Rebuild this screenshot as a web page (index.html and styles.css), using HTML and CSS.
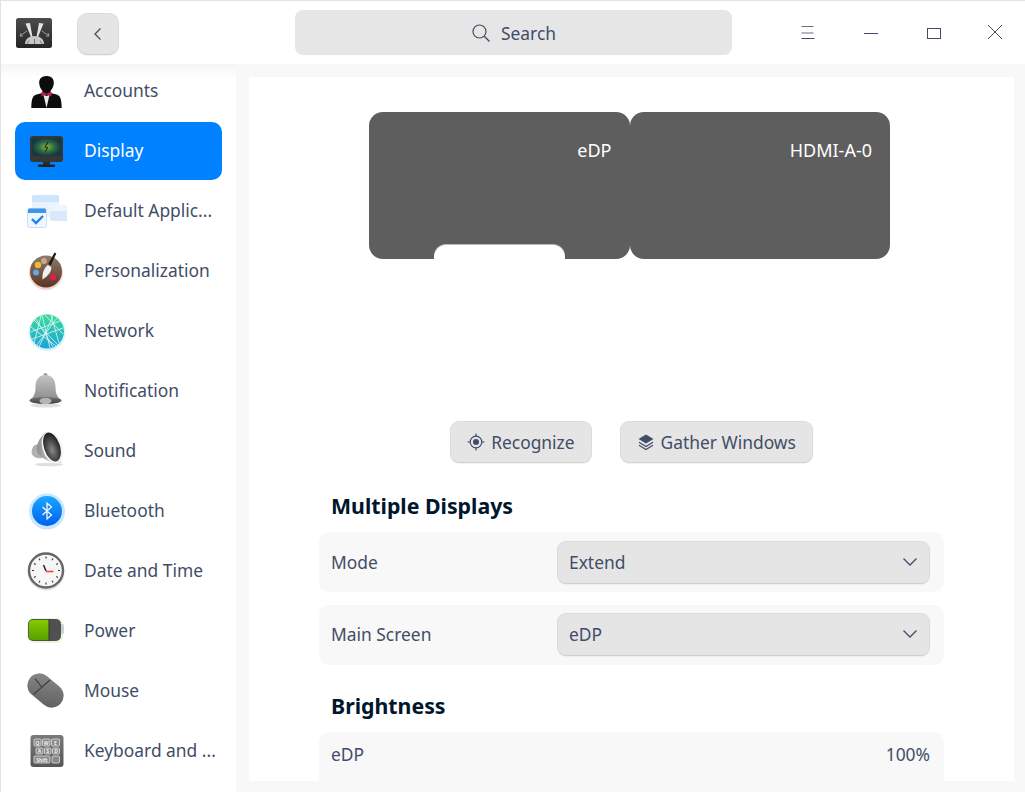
FILE: index.html
```html
<!DOCTYPE html>
<html lang="en">
<head>
<meta charset="utf-8">
<title>Display</title>
<link rel="stylesheet" href="styles.css">
</head>
<body>
<div class="window">
  <header class="titlebar">
    <div class="title-left">
      <svg class="app-logo" width="36" height="32" viewBox="0 0 36 32">
        <defs><linearGradient id="lg" x1="0" y1="0" x2="0" y2="1"><stop offset="0" stop-color="#4c4c4c"/><stop offset="1" stop-color="#262626"/></linearGradient></defs>
        <rect x="0" y="1" width="36" height="30" rx="2.500" fill="url(#lg)"/>
        <path d="M9.500 6.500l4.500-.5 2.500 14h-1.500zM27.500 6.500l-4.500-.5-2.500 14h1.500z" fill="#e4e4e4"/>
        <path d="M9 27c0-5 4-8 9.500-8s9.500 3 9.500 8z" fill="#c8c8c8"/>
        <path d="M13 23.500l-2 3.500M18.500 22v5M24 23.500l2 3.500" stroke="#555" stroke-width=".7"/>
        <path d="M4 19l7-5M33 19l-7-5M4 19l1-3M4 19l3 .2M33 19l-1-3M33 19l-3 .2" stroke="#9a9a9a" stroke-width="1" fill="none"/>
      </svg>
      <button class="back-btn" type="button" aria-label="Back">
        <svg width="10" height="16" viewBox="0 0 10 16"><path d="M7.500 2.500L2 8l5.500 5.500" fill="none" stroke="#414d68" stroke-width="1.300"/></svg>
      </button>
    </div>
    <div class="search">
      <svg width="20" height="20" viewBox="0 0 20 20"><circle cx="8.500" cy="8.500" r="6.500" fill="none" stroke="#414d68" stroke-width="1.200"/><path d="M13.300 13.300L18.500 18.500" stroke="#414d68" stroke-width="1.400"/></svg>
      <span>Search</span>
    </div>
    <div class="win-controls">
      <svg width="14" height="14" viewBox="0 0 14 14"><path d="M0.500 .5h12M0.500 7h12" stroke="#414d68" stroke-width="1" opacity=".8"/><path d="M0.500 12.500h13" stroke="#414d68" stroke-width="1"/></svg>
      <svg width="14" height="14" viewBox="0 0 14 14"><path d="M0 7.500h14" stroke="#414d68" stroke-width="1"/></svg>
      <svg width="14" height="14" viewBox="0 0 14 14"><rect x="0.500" y="2.500" width="13" height="10" fill="none" stroke="#414d68" stroke-width="1"/></svg>
      <svg class="close-icon" width="14" height="14" viewBox="0 0 14 14"><path d="M0 0L14 14M14 0L0 14" stroke="#414d68" stroke-width="1"/></svg>
    </div>
  </header>
  <div class="body">
    <nav class="sidebar">
      <ul class="nav">
        <li class="nav-item">
          <svg class="nav-icon" viewBox="0 0 40 40"><path d="M19.500 5c-5 0-7.500 3-7.300 7 .1 3 1.500 6 3.300 8v2l-6 1.500C6 24.500 4.500 27 4.300 37h30.400c-.2-10-1.700-12.500-5.200-13.500l-6-1.500v-2c1.800-2 3.200-5 3.300-8 .2-4-2.300-7-6.800-7z" fill="#0c0c0c"/><path d="M16.500 24l3 13 3-13-3 1z" fill="#e8e8e8"/><path d="M14.500 20.500l4.500 2h1l4.500-2v5l-4.500-2h-1l-4.500 2z" fill="#c5195f"/></svg>
          <span>Accounts</span>
        </li>
        <li class="nav-item active">
          <svg class="nav-icon" viewBox="0 0 40 40"><defs><radialGradient id="scr"><stop offset="0" stop-color="#88bd3a"/><stop offset="0.550" stop-color="#2f6a48"/><stop offset="1" stop-color="#15393f"/></radialGradient></defs><rect x="3" y="5" width="33" height="26" rx="3" fill="#363636"/><rect x="5" y="7" width="29" height="18" fill="url(#scr)"/><path d="M21 11l-3 5 2.500 .5-2 4" stroke="#1c2a1c" stroke-width="1.100" fill="none"/><rect x="16" y="31" width="7" height="3" fill="#2c2c2c"/><rect x="11" y="33.500" width="17" height="2.500" rx="1" fill="#222"/></svg>
          <span>Display</span>
        </li>
        <li class="nav-item">
          <svg class="nav-icon" viewBox="0 0 40 40"><rect x="5" y="4" width="27" height="22" rx="2" fill="#eaf3fd"/><path d="M5 6a2 2 0 0 1 2-2h23a2 2 0 0 1 2 2v5H5z" fill="#cfe4fd"/><rect x="23" y="14" width="18" height="16" rx="2" fill="#d9e9fc"/><path d="M23 16a2 2 0 0 1 2-2h14a2 2 0 0 1 2 2v4H23z" fill="#eef5fe"/><rect x="0.500" y="17.500" width="19" height="19" rx="2" fill="#eef6fe" stroke="#c7e1fb"/><path d="M1 19a1.500 1.500 0 0 1 1.500-1.500h15A1.500 1.500 0 0 1 19 19v3H1z" fill="#3d96e8"/><path d="M5 28l4 4 7-7" fill="none" stroke="#1a84e6" stroke-width="2.400"/></svg>
          <span>Default Applic...</span>
        </li>
        <li class="nav-item">
          <svg class="nav-icon" viewBox="0 0 40 40"><defs><linearGradient id="pal" x1="0" y1="0" x2="0" y2="1"><stop offset="0" stop-color="#8f7a69"/><stop offset="1" stop-color="#5a3525"/></linearGradient></defs><circle cx="19" cy="22" r="17" fill="#d98a70" opacity=".35"/><circle cx="19" cy="20.500" r="16" fill="url(#pal)"/><circle cx="17" cy="10" r="3" fill="#c9a692"/><circle cx="11" cy="14" r="3.200" fill="#f0b830"/><circle cx="9" cy="21.500" r="3" fill="#5fa9e8"/><circle cx="26" cy="26" r="3.200" fill="#de1f4d"/><path d="M27.500 1.500l1.800 1-5.500 12-2.500-1.500z" fill="#1c1c1c"/><path d="M20.800 14l3.500 2c.5 4-3 9-8.800 12.500-.5-5.500 1-11 5.300-14.500z" fill="#f0f0f0"/></svg>
          <span>Personalization</span>
        </li>
        <li class="nav-item">
          <svg class="nav-icon" viewBox="0 0 40 40"><defs><linearGradient id="net" x1="0" y1="0" x2="0" y2="1"><stop offset="0" stop-color="#3bdc98"/><stop offset="1" stop-color="#1aa4dc"/></linearGradient></defs><circle cx="20" cy="21.500" r="18.500" fill="#7fdff5" opacity=".35"/><circle cx="20" cy="20.500" r="17" fill="url(#net)"/><path d="M7 9l24 25M3.500 21L33 10M15 4l8 33M26 5L12 36M5 28L36 17M18 4l18 19M10 34L30 7M9 8l17 28M4 16l25 19M14 5l-7 27M24 4l8 28" stroke="#e8f8f5" stroke-width=".8" fill="none"/></svg>
          <span>Network</span>
        </li>
        <li class="nav-item">
          <svg class="nav-icon" viewBox="0 0 40 40"><defs><linearGradient id="bell" x1="0" y1="0" x2="0" y2="1"><stop offset="0" stop-color="#c4c4c4"/><stop offset="1" stop-color="#8c8c8c"/></linearGradient><linearGradient id="rim" x1="0" y1="0" x2="0" y2="1"><stop offset="0" stop-color="#777"/><stop offset="1" stop-color="#3c3c3c"/></linearGradient></defs><ellipse cx="18.500" cy="34.500" rx="15" ry="2" fill="#000" opacity=".13"/><circle cx="18.500" cy="4" r="2" fill="#999"/><path d="M18.500 4c-7 0-10 5-10 12 0 7-2 10-5.500 13h31c-3.500-3-5.500-6-5.500-13 0-7-3-12-10-12z" fill="url(#bell)"/><ellipse cx="18.500" cy="29.500" rx="16" ry="3.500" fill="url(#rim)"/><ellipse cx="18.500" cy="30" rx="6" ry="3.300" fill="#b4b4b4"/></svg>
          <span>Notification</span>
        </li>
        <li class="nav-item">
          <svg class="nav-icon" viewBox="0 0 40 40"><defs><radialGradient id="spk" cx=".45" cy=".6" r=".6"><stop offset="0" stop-color="#8a8a8a"/><stop offset="0.550" stop-color="#4a4a4a"/><stop offset="1" stop-color="#1e1e1e"/></radialGradient><linearGradient id="cone" x1="0" y1="0" x2="1" y2="0"><stop offset="0" stop-color="#8e8e8e"/><stop offset="1" stop-color="#e8e8e8"/></linearGradient></defs><ellipse cx="22" cy="33.500" rx="14" ry="1.800" fill="#000" opacity=".13"/><path d="M8 14c-3 2-4 6-3 9 1 3 5 5 10 4l-2-14z" fill="#b0b0b0"/><path d="M19 1C12 7 9 14 10 20c.8 5 12 13 25 12L30 8z" fill="url(#cone)"/><ellipse cx="25.500" cy="16.500" rx="10" ry="16.500" transform="rotate(-18 25.500 16.500)" fill="#f4f4f4"/><ellipse cx="25" cy="16" rx="8" ry="15" transform="rotate(-18 25 16)" fill="url(#spk)"/></svg>
          <span>Sound</span>
        </li>
        <li class="nav-item">
          <svg class="nav-icon" viewBox="0 0 40 40"><defs><linearGradient id="bt" x1="0" y1="0" x2="0" y2="1"><stop offset="0" stop-color="#1ca6ff"/><stop offset="1" stop-color="#0062ee"/></linearGradient></defs><circle cx="20" cy="20.500" r="18" fill="#62bbff" opacity=".35"/><circle cx="20" cy="20" r="15" fill="url(#bt)"/><path d="M15.500 16l9 8-4.500 4V12l4.500 4-9 8" fill="none" stroke="#fff" stroke-width="1.200"/></svg>
          <span>Bluetooth</span>
        </li>
        <li class="nav-item">
          <svg class="nav-icon" viewBox="0 0 40 40"><circle cx="19" cy="21" r="18.500" fill="#000" opacity=".12"/><circle cx="19" cy="19.500" r="17" fill="#f6f6f6" stroke="#666" stroke-width="2.400"/><path d="M19 5.500v2M19 31.500v2M5 19.500h2M31 19.500h2M12 7.500l1 1.700M26 7.500l-1 1.700M7 12.500l1.700 1M31 12.500l-1.700 1M7 26.500l1.700-1M31 26.500l-1.700-1M12 31.500l1-1.700M26 31.500l-1-1.700" stroke="#333" stroke-width="1.100"/><path d="M16.500 14l2.500 6" stroke="#222" stroke-width="1.500"/><path d="M19 20.500h7.500" stroke="#f04848" stroke-width="1.600"/></svg>
          <span>Date and Time</span>
        </li>
        <li class="nav-item">
          <svg class="nav-icon" viewBox="0 0 40 40"><defs><linearGradient id="batt" x1="0" y1="0" x2="0" y2="1"><stop offset="0" stop-color="#84cc00"/><stop offset="1" stop-color="#58a000"/></linearGradient></defs><rect x="0" y="7" width="36" height="25" rx="7" fill="#a8e060" opacity=".25"/><rect x="33" y="13" width="4" height="10" rx="1.500" fill="#d0d0d0"/><rect x="1" y="8" width="33" height="22" rx="5" fill="#505050"/><path d="M1.800 13a4 4 0 0 1 4-4H22v20H5.800a4 4 0 0 1-4-4z" fill="url(#batt)"/><path d="M22 8v22" stroke="#333"/></svg>
          <span>Power</span>
        </li>
        <li class="nav-item">
          <svg class="nav-icon" viewBox="0 0 40 40"><defs><linearGradient id="ms" x1="0" y1="0" x2="1" y2="1"><stop offset="0" stop-color="#8c8c8c"/><stop offset="1" stop-color="#5c5c5c"/></linearGradient></defs><rect x="-1.500" y="7.500" width="40" height="24" rx="12" transform="rotate(40 18.500 19.500)" fill="url(#ms)"/><path d="M6.300 23.700L23 9M8 7.700l6.700 8.300" stroke="#3c3c3c" stroke-width="1.100" fill="none"/></svg>
          <span>Mouse</span>
        </li>
        <li class="nav-item">
          <svg class="nav-icon" viewBox="0 0 40 40"><defs><linearGradient id="kb" x1="0" y1="0" x2="0" y2="1"><stop offset="0" stop-color="#7a7a7a"/><stop offset="1" stop-color="#565656"/></linearGradient></defs><rect x="3.500" y="4" width="33" height="32" rx="3" fill="url(#kb)"/><g fill="#8a8a8a" stroke="#e0e0e0" stroke-width=".8"><rect x="7" y="8" width="7" height="7" rx="1"/><rect x="15.500" y="8" width="7.500" height="7" rx="1"/><rect x="24.500" y="8" width="8" height="7" rx="1"/><rect x="9" y="17" width="7" height="6" rx="1"/><rect x="17.500" y="17" width="6.500" height="6" rx="1"/><rect x="25.500" y="17" width="7" height="6" rx="1"/><rect x="7" y="25" width="16" height="7" rx="1"/><rect x="25" y="25" width="7.500" height="7" rx="1"/></g><g class="key-label"><text x="10.500" y="14">Q</text><text x="19.200" y="14">W</text><text x="28.500" y="14">E</text><text x="12.500" y="22">A</text><text x="20.700" y="22">S</text><text x="29" y="22">D</text><text x="15" y="31">Shift</text></g></svg>
          <span>Keyboard and ...</span>
        </li>
      </ul>
    </nav>
    <main class="panel">
      <div class="monitors">
        <div class="monitor">
          <span class="monitor-name">eDP</span>
          <div class="dock"></div>
        </div>
        <div class="monitor">
          <span class="monitor-name">HDMI-A-0</span>
        </div>
      </div>
      <div class="actions">
        <button class="btn" type="button">
          <svg width="18" height="18" viewBox="0 0 18 18"><circle cx="9" cy="9" r="5.800" fill="none" stroke="#414d68" stroke-width="1.200"/><circle cx="9" cy="9" r="3" fill="#414d68"/><path d="M9 .5v3M9 14.500v3M.5 9h3M14.500 9h3" stroke="#414d68" stroke-width="1.200"/></svg>
          Recognize
        </button>
        <button class="btn" type="button">
          <svg width="18" height="18" viewBox="0 0 18 18"><path d="M9 1.500l7.500 4.500L9 10.500 1.500 6z" fill="#414d68"/><path d="M2 9.300l7 4.200 7-4.200M2 12.300l7 4.200 7-4.200" fill="none" stroke="#414d68" stroke-width="1.200"/></svg>
          Gather Windows
        </button>
      </div>
      <h2 class="section-title first">Multiple Displays</h2>
      <div class="row">
        <span>Mode</span>
        <div class="select"><span>Extend</span><svg width="16" height="10" viewBox="0 0 16 10"><path d="M1.500 1.500L8 8l6.500-6.500" fill="none" stroke="#414d68" stroke-width="1.300"/></svg></div>
      </div>
      <div class="row row-raised">
        <span>Main Screen</span>
        <div class="select"><span>eDP</span><svg width="16" height="10" viewBox="0 0 16 10"><path d="M1.500 1.500L8 8l6.500-6.500" fill="none" stroke="#414d68" stroke-width="1.300"/></svg></div>
      </div>
      <h2 class="section-title">Brightness</h2>
      <div class="row tall">
        <span>eDP</span>
        <span>100%</span>
      </div>
    </main>
  </div>
</div>
</body>
</html>
```
FILE: styles.css
```css
* { box-sizing: border-box; }
html, body { margin: 0; height: 100%; overflow: hidden; }
body { font-family: "Noto Sans", sans-serif; font-size: 17.4px; color: #414d68; background: #f8f8f8; }
.window { height: 792px; display: flex; flex-direction: column; border-top: 1px solid #e2e2e2; border-left: 1px solid #e2e2e2; }
.titlebar { height: 63px; flex: none; background: #fff; display: flex; align-items: center; position: relative; }
.title-left { display: flex; align-items: center; width: 294px; padding-left: 15px; gap: 25px; flex: none; }
.app-logo { display: block; }
.back-btn { width: 42px; height: 42px; margin-top: 2px; border-radius: 10px; border: 1px solid #dcdcdc; border-bottom-color: #d2d2d2; background: #e5e5e5; display: flex; align-items: center; justify-content: center; padding: 0; box-shadow: 0 1px 1px rgba(0,0,0,.05); }
.search { width: 437px; height: 45px; border-radius: 8px; background: #e6e6e6; display: flex; align-items: center; justify-content: center; gap: 10px; }
.win-controls { display: flex; align-items: center; margin-left: 69px; gap: 49px; }
.win-controls svg { display: block; }
.win-controls .close-icon { margin: -2px 0 0 -2px; }
.body { flex: 1; display: flex; min-height: 0; }
.sidebar { width: 235px; flex: none; background: linear-gradient(#f5f5f5, #fff 14px); overflow: hidden; }
.nav { list-style: none; margin: -2px 0 0; padding: 0 14px; display: flex; flex-direction: column; gap: 2px; }
.nav-item { height: 58px; flex: none; border-radius: 10px; display: flex; align-items: center; gap: 17px; padding-left: 12px; white-space: nowrap; }
.nav-item > span { padding-bottom: 2px; }
.nav-item.active { background: #0081ff; color: #fff; }
.nav-icon { width: 40px; height: 40px; flex: none; display: block; }
.key-label { font-size: 5px; fill: #f0f0f0; text-anchor: middle; font-weight: 700; }
.panel { width: 765px; margin: 13px 0 11px 13px; background: #fff; overflow: hidden; padding: 35px 70px 0; flex: none; }
.monitors { display: flex; justify-content: center; height: 147px; margin-right: 4px; }
.monitor { width: 260.500px; height: 147px; background: #5e5e5e; border-radius: 14px; color: #fff; display: flex; justify-content: flex-end; padding: 25px 18px 0; position: relative; font-size: 18px; line-height: 26px; }
.monitor-name { display: block; }
.dock { position: absolute; left: 65px; bottom: 0; width: 131px; height: 14px; background: #fff; border-radius: 12px 12px 0 0; box-shadow: 0 -1px 0 #b8b8b8; }
.actions { display: flex; justify-content: center; gap: 28px; margin-top: 162px; }
.btn { height: 42px; padding: 0 16px; border-radius: 9px; border: 1px solid #dcdcdc; border-bottom-color: #d0d0d0; background: #e5e5e5; color: #414d68; font: inherit; display: flex; align-items: center; gap: 6px; box-shadow: 0 1px 1px rgba(0,0,0,.05); }
.section-title { margin: 0; padding-left: 12px; font-size: 21.3px; font-weight: 700; line-height: 30px; color: #00162c; }
.section-title.first { margin-top: 28px; margin-bottom: 11px; }
.section-title:not(.first) { margin-top: 26px; margin-bottom: 11px; }
.row { height: 60px; background: #f8f8f8; border-radius: 10px; display: flex; align-items: center; justify-content: space-between; padding: 0 14px 0 12px; margin-bottom: 13px; }
.row-raised { padding-bottom: 2px; }
.row.tall { padding-bottom: 17px; margin-bottom: 0; }
.select { width: 373px; height: 43px; border-radius: 9px; border: 1px solid #dcdcdc; border-bottom-color: #d0d0d0; background: #e5e5e5; display: flex; align-items: center; justify-content: space-between; padding: 0 11px; box-shadow: 0 1px 1px rgba(0,0,0,.05); }
.select svg { display: block; }
```
